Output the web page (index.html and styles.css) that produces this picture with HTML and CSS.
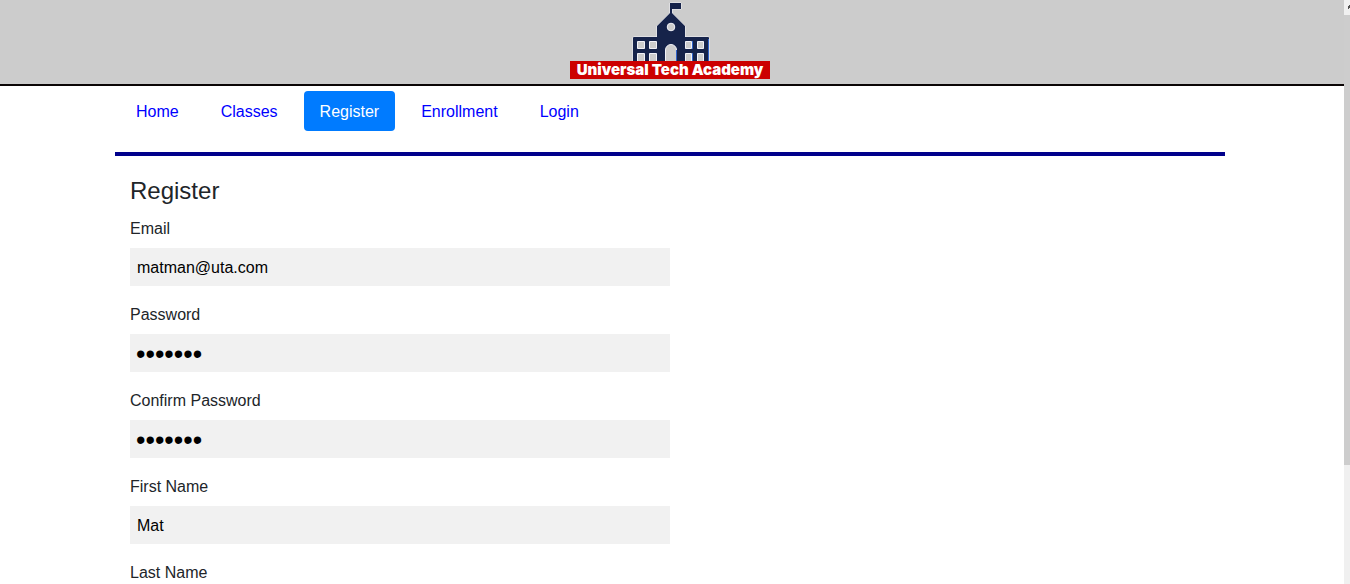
FILE: index.html
```html
<!DOCTYPE html>
<html lang="en">
<head>
<meta charset="utf-8">
<title>Universal Tech Academy - Register</title>
<link rel="stylesheet" href="styles.css">
</head>
<body>
<div class="viewport">
  <div class="page">
    <header class="banner">
      <div class="logo">
        <svg class="logo-art" width="80" height="59" viewBox="630 2 80 59" aria-hidden="true">
          <g fill="#16234a" stroke="#f2f2f8" stroke-width="1" paint-order="stroke">
            <path d="M633 62V38q0-1 1-1H657V26L670 13V3H681V9H672V13L685 26V37H708q1 0 1 1V62Z"/>
          </g>
          <g fill="#cccccc" stroke="#f2f2f8" stroke-width="1">
            <circle cx="671" cy="27" r="3.8"/>
            <path d="M665.5 62V50a5.500 5.500 0 0 1 11 0V62"/>
            <path d="M637.500 41.500h7v7h-7zM649.500 41.500h7v7h-7zM685.500 41.500h6v7h-6zM697.500 41.500h6v7h-6z"/>
            <path d="M637.500 53.500h7v9h-7zM649.500 53.500h7v9h-7zM685.500 53.500h6v9h-6zM697.500 53.500h6v9h-6z"/>
          </g>
          <path d="M676.500 50V61M692.500 41V49M692.500 53V61M708.500 39V61" stroke="#2f62c8" fill="none"/>
        </svg>
        <span class="logo-name">Universal Tech Academy</span>
      </div>
    </header>
    <div class="container">
      <nav class="nav">
        <a class="nav-link" href="#">Home</a>
        <a class="nav-link" href="#">Classes</a>
        <a class="nav-link active" href="#" aria-current="page">Register</a>
        <a class="nav-link" href="#">Enrollment</a>
        <a class="nav-link" href="#">Login</a>
      </nav>
      <form class="form">
        <h1 class="title">Register</h1>
        <div class="field">
          <label for="email">Email</label>
          <input id="email" type="email" value="matman@uta.com">
        </div>
        <div class="field">
          <label for="password">Password</label>
          <input id="password" type="password" value="1234567">
        </div>
        <div class="field">
          <label for="confirm">Confirm Password</label>
          <input id="confirm" type="password" value="1234567">
        </div>
        <div class="field">
          <label for="first">First Name</label>
          <input id="first" type="text" value="Mat">
        </div>
        <div class="field">
          <label for="last">Last Name</label>
          <input id="last" type="text">
        </div>
      </form>
    </div>
  </div>
  <div class="scrollbar" aria-hidden="true">
    <div class="scroll-up"><svg width="6" height="15" viewBox="0 0 6 15"><path d="M4 9V6H5V5H6V8H5V9Z" fill="#505050"/></svg></div>
    <div class="scroll-thumb"></div>
  </div>
</div>
</body>
</html>
```
FILE: styles.css
```css
* {
  box-sizing: border-box;
}

body {
  margin: 0;
  font: 16px/26px "Liberation Sans", Arial, sans-serif;
  color: #212529;
  background: #fff;
}

.viewport {
  display: flex;
  height: 100vh;
  overflow: hidden;
}

.page {
  flex: 1;
  min-width: 0;
}

.banner {
  display: flex;
  justify-content: center;
  padding: 2px 4px 5px 0;
  background: #ccc;
  border-bottom: 2px solid #0a0505;
}

.logo {
  display: flex;
  flex-direction: column;
  align-items: center;
  width: 200px;
}

.logo-art {
  display: block;
}

.logo-name {
  width: 100%;
  background: #c00;
  color: #fff;
  font: 900 15px/18px Inter, sans-serif;
  text-align: center;
  white-space: nowrap;
}

.container {
  max-width: 1114px;
  margin: 0 auto;
  padding-right: 4px;
}

.nav {
  display: flex;
  gap: 10px;
  padding: 5px 5px 21px;
  border-bottom: 4px solid #00008b;
}

.nav-link {
  padding: 8px 16px 6px;
  border-radius: 4px;
  color: #00f;
  text-decoration: none;
}

.nav-link.active {
  background: #007bff;
  color: #fff;
}

.form {
  width: 50%;
  padding: 20px 0 0 15px;
}

.title {
  margin: 0 0 10px;
  font-size: 24px;
  font-weight: 400;
  line-height: 30px;
}

.field {
  display: flex;
  flex-direction: column;
  gap: 6px;
  margin-bottom: 16px;
}

.field input {
  width: 100%;
  height: 38px;
  padding: 2px 7px 0;
  border: 0;
  border-radius: 0;
  background: #f1f1f1;
  color: #000;
  font: inherit;
}

.field input[type="password"] {
  padding: 2px 6px 0;
  font-size: 27px;
}

.scrollbar {
  flex: none;
  display: flex;
  flex-direction: column;
  width: 6px;
  background: #f0f0f0;
}

.scroll-up {
  flex: none;
  height: 15px;
}

.scroll-up svg {
  display: block;
}

.scroll-thumb {
  height: 77%;
  background: #cdcdcd;
}
```
